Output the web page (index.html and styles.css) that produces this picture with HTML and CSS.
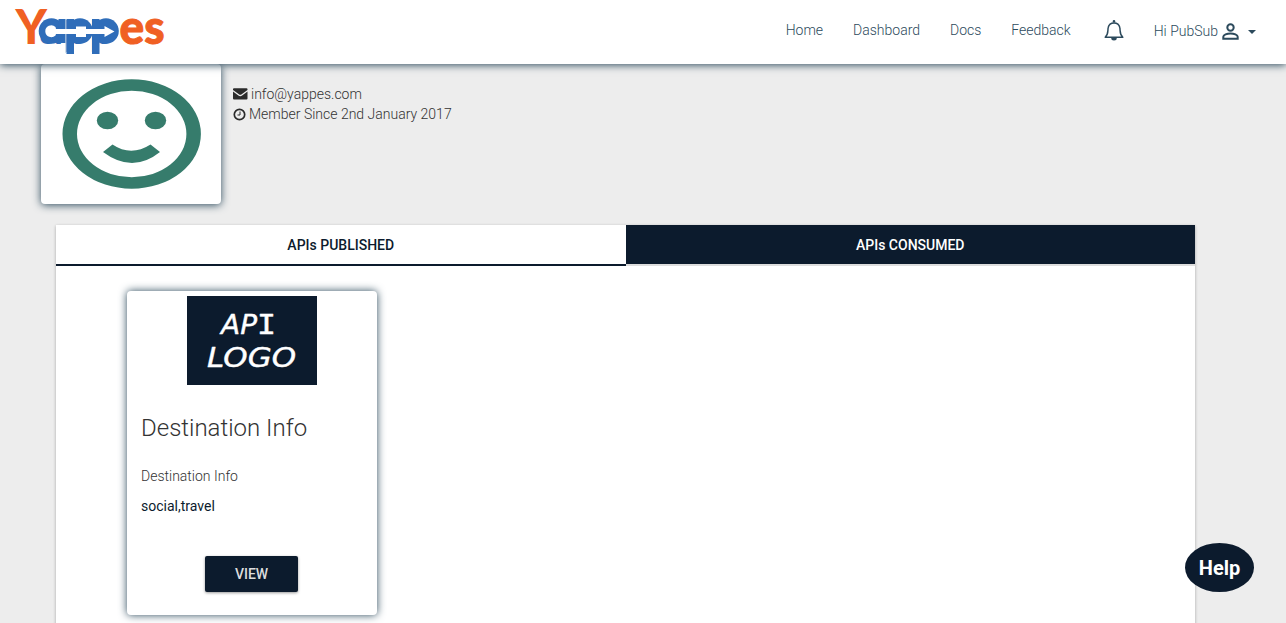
FILE: index.html
```html
<!DOCTYPE html>
<html lang="en">
<head>
<meta charset="utf-8">
<title>Yappes</title>
<link rel="stylesheet" href="styles.css">
</head>
<body>
<header class="navbar">
  <svg class="brand" width="152" height="50" viewBox="14 6 152 50">
    <g class="brand-text">
      <text x="15.500" y="43.800" font-size="47" textLength="31.500" lengthAdjust="spacingAndGlyphs" class="orange">Y</text>
      <text class="blue" y="43.800" font-size="46"><tspan x="39.500">a</tspan><tspan x="63.500">p</tspan><tspan x="89.500">p</tspan></text>
      <text x="119.500" y="43.800" font-size="47" textLength="45" lengthAdjust="spacingAndGlyphs" class="orange thick">es</text>
    </g>
    <g class="blue">
      <circle cx="51.500" cy="31" r="12.800"/><circle cx="80" cy="31" r="12.800"/><circle cx="106" cy="31" r="12.800"/>
      <path d="M58.500 19h7v24h-7zM66.500 19h7.500v35h-7.500zM92 19h7.500v35h-7.500z"/>
    </g>
    <path fill="#fff" d="M45.300 31.500a6 6 0 0 1 10.200-4.500l.5 2h20v-2.500h10v2.500h18.500v-3l10 5.500-10 5.500v-3H86v3H76v-3H56l-.5 1.500a6 6 0 0 1-10.200-4z"/>
    <path d="M66 19v10M66 34v19" stroke="#88b8dc" stroke-width=".8"/>
  </svg>
  <nav class="links">
    <a>Home</a><a>Dashboard</a><a>Docs</a><a>Feedback</a>
  </nav>
  <svg class="bell" width="20" height="22" viewBox="0 0 20 22">
    <path d="M1.200 17.200C4.800 14 3.500 10.500 4.200 7.500 4.800 4.500 7 2.900 10 2.900s5.200 1.600 5.800 4.600c.7 3-.6 6.500 3 9.700z" fill="none" stroke="#2c4a5c" stroke-width="1.500" stroke-linejoin="round"/>
    <path d="M8.700 2.500V1.300a1.300 1.300 0 0 1 2.600 0v1.200zM7.200 18h5.600a2.800 2.500 0 0 1-5.600 0z" fill="#2c4a5c"/>
  </svg>
  <div class="user">
    <span>Hi PubSub</span>
    <svg class="person" width="17" height="17" viewBox="0 0 17 17" fill="none" stroke="#2c4a5c" stroke-width="2"><circle cx="8.500" cy="4.500" r="3.200"/><path d="M1.300 15.700v-1.900c0-2 3.700-3.400 7.200-3.400s7.200 1.400 7.200 3.400v1.900z"/></svg>
    <i class="caret"></i>
  </div>
</header>
<main class="page">
  <section class="profile">
    <div class="avatar">
      <svg width="180" height="140" viewBox="41 64 180 140" fill="#367c6c">
        <path fill-rule="evenodd" d="M62.500 134a69.200 54.700 0 1 0 138.400 0a69.200 54.700 0 1 0-138.400 0zM77 134a54.700 43.200 0 1 1 109.400 0a54.700 43.200 0 1 1-109.400 0z"/>
        <ellipse cx="107.500" cy="120.500" rx="10.700" ry="8.700"/><ellipse cx="155.500" cy="120.500" rx="10.700" ry="8.700"/>
        <path d="M103 152l9.500-7.500q18.500 12.500 38 0l9.500 7.500q-27.500 22-57 0z"/>
      </svg>
    </div>
    <div class="details">
      <div class="line"><svg width="15" height="12" viewBox="0 0 15 12" fill="#2b2b2b"><path d="M0 2V1.300Q0 .3 1 .3h12.500q1 0 1 1V2L8.700 6.300q-1.400 1-2.800 0zM0 3.600l5.400 4q1.900 1.200 3.700 0l5.400-4v7q0 1-1 1H1q-1 0-1-1z"/></svg><span>info@yappes.com</span></div>
      <div class="line clock"><svg width="13" height="13" viewBox="0 0 13 13" fill="none" stroke="#2b2b2b"><circle cx="6.500" cy="6.500" r="5.200" stroke-width="1.700"/><path d="M7 3.500V7H4.500" stroke-width="1"/></svg><span>Member Since 2nd January 2017</span></div>
    </div>
  </section>
  <section class="panel">
    <div class="tabs"><div class="tab active">APIs PUBLISHED</div><div class="tab">APIs CONSUMED</div></div>
    <article class="card">
      <svg class="api-logo" width="130" height="89" viewBox="0 0 130 89">
        <rect width="130" height="89" fill="#0c1b2d"/>
        <g class="comic">
          <text x="34" y="38" font-size="26" textLength="36" lengthAdjust="spacingAndGlyphs">AP</text>
          <text x="70" y="38" font-size="26" class="mono" textLength="19" lengthAdjust="spacingAndGlyphs">I</text>
          <text x="20" y="71" font-size="26" textLength="89" lengthAdjust="spacingAndGlyphs">LOGO</text>
        </g>
      </svg>
      <h2 class="title">Destination Info</h2>
      <p class="desc">Destination Info</p>
      <p class="tags">social,travel</p>
      <button class="view">VIEW</button>
    </article>
  </section>
</main>
<div class="help">Help</div>
</body>
</html>
```
FILE: styles.css
```css
* { box-sizing: border-box; }
html, body { height: 100%; overflow: hidden; }
body { margin: 0; background: #ededed; font-family: Roboto, sans-serif; font-size: 14px; font-weight: 300; line-height: 20px; color: #333; }
.navbar { position: relative; z-index: 2; display: flex; align-items: flex-start; height: 64px; padding: 6px 30px 0 14px; background: #fff; color: #2c4a5c; box-shadow: 0 1px 8px #2c4a5c; }
.brand { display: block; overflow: visible; }
.brand-text { font-family: Lato, sans-serif; font-weight: 900; }
.orange { fill: #f06023; }
.thick { stroke: #f06023; stroke-width: 1px; }
.blue { fill: #2f6db9; }
.links { display: flex; gap: 30px; margin: 14px 33.5px 0 auto; }
.bell { margin: 13.5px 29.5px 0 0; }
.user { display: flex; align-items: center; margin-top: 15px; }
.person { margin-left: 4px; }
.caret { margin: 2px 0 0 9px; border: 4px solid transparent; border-top-color: #2c4a5c; border-bottom: 0; }
.profile { display: flex; gap: 12px; height: 161px; padding-left: 41px; }
.avatar { width: 180px; height: 140px; background: #fff; border-radius: 4px; box-shadow: 0 1px 8px #2c4a5c; }
.avatar svg { display: block; }
.details { padding-top: 20px; }
.line { display: flex; align-items: center; gap: 3px; }
.panel { width: 1139px; height: 420px; margin-left: 56px; background: #fff; box-shadow: 0 1px 3px rgba(0,0,0,.3); }
.tabs { display: flex; height: 41px; }
.tab { flex: 1; height: 41px; background: #0c1b2d; color: #fff; border-bottom: 2px solid #ddd; line-height: 40px; text-align: center; font-weight: 500; }
.tab.active { background: #fff; color: #0c1b2d; border-bottom-color: #0c1b2d; }
.card { display: flex; flex-direction: column; width: 250px; height: 324px; margin: 25px 0 0 71px; padding: 5px 14px 0; border-radius: 4px; background: #fff; box-shadow: 0 0 8px #2c4a5c; }
.api-logo { align-self: center; }
.comic { font-family: "DejaVu Sans", sans-serif; font-style: oblique; fill: #fff; stroke: #fff; stroke-width: .4px; stroke-linejoin: round; }
.mono { font-family: "DejaVu Sans Mono", monospace; font-style: normal; }
.title { margin: 26px 0 0; font-size: 24px; line-height: 34px; font-weight: 300; }
.desc { margin: 21px 0 0; }
.tags { margin: 10px 0 0; font-weight: 400; color: #0c1b2d; }
.view { align-self: flex-start; width: 93px; height: 36px; margin: 40px 0 0 64px; padding: 0; border: 0; border-radius: 2px; background: #0c1b2d; color: #ddd; font: 500 14px Roboto, sans-serif; box-shadow: 0 1px 3px rgba(0,0,0,.4); }
.help { position: fixed; z-index: 3; left: 1185px; top: 543px; width: 69px; height: 49px; border-radius: 50%; background: #0c1b2d; color: #fff; font-size: 20px; font-weight: 700; line-height: 51px; text-align: center; }
```
